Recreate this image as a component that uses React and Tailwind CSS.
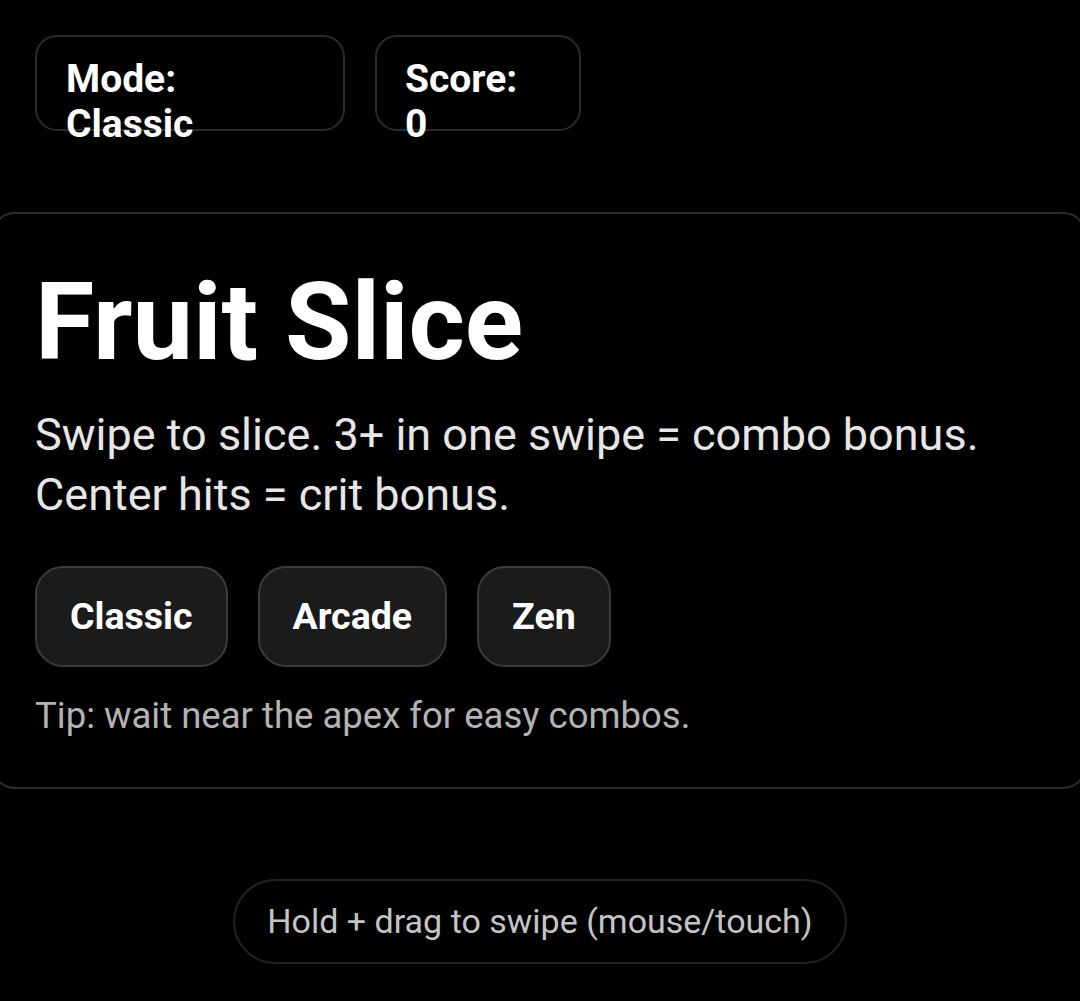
import React from 'react';

const modes = ['Classic', 'Arcade', 'Zen'];

export default function App() {
    return (
        <div className="min-h-[1001px] bg-black text-white font-['Roboto',sans-serif] overflow-hidden">
            {/* HUD */}
            <div className="flex gap-[30px] pl-[35px] pt-[35px]">
                <div className="w-[310px] h-[96px] rounded-[22px] border-2 border-[#2a2a2a] px-[29px] pt-[20px] text-[39px] leading-[45px] font-bold">
                    <div>Mode:</div>
                    <div>Classic</div>
                </div>
                <div className="w-[206px] h-[96px] rounded-[22px] border-2 border-[#2a2a2a] px-[28px] pt-[20px] text-[39px] leading-[45px] font-bold">
                    <div>Score:</div>
                    <div>0</div>
                </div>
            </div>

            {/* Menu card */}
            <div className="ml-[-9px] mt-[81px] w-[1096px] rounded-[24px] border-2 border-[#2c2c2c] pl-[42px] pt-[49px] pb-[46px]">
                <h1 className="text-[108px] leading-[119px] font-bold">Fruit Slice</h1>
                <p className="mt-[23px] text-[45px] leading-[60px] text-[#e6e6e6]">
                    Swipe to slice. 3+ in one swipe = combo bonus.
                    <br />
                    Center hits = crit bonus.
                </p>
                <div className="mt-[41px] flex gap-[30px]">
                    {modes.map((m) => (
                        <button
                            key={m}
                            className="h-[101px] px-[33px] rounded-[28px] border-2 border-[#3b3b3b] bg-[#1b1b1b] text-[37.5px] font-bold text-white"
                        >
                            {m}
                        </button>
                    ))}
                </div>
                <p className="mt-[23px] text-[36.5px] leading-[51px] text-[#b3b3b3]">Tip: wait near the apex for easy combos.</p>
            </div>

            {/* Hint pill */}
            <div className="flex justify-center mt-[90px]">
                <div className="h-[85px] px-[32px] rounded-full border-2 border-[#222222] flex items-center text-[34px] text-[#c4c4c4]">
                    Hold + drag to swipe (mouse/touch)
                </div>
            </div>
        </div>
    );
}
